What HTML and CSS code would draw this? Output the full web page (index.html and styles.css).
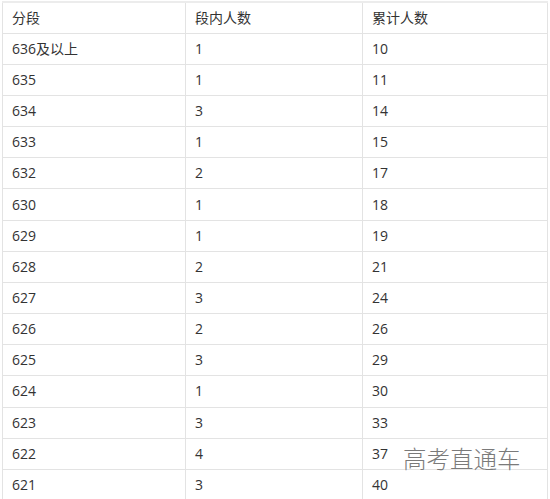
FILE: index.html
```html
<!DOCTYPE html>
<html lang="zh">
<head>
<meta charset="utf-8">
<link rel="stylesheet" href="styles.css">
</head>
<body>
<div class="wrap">
<table class="score">
<colgroup><col class="c1"><col class="c2"><col class="c3"></colgroup>
<tr><td>分段</td><td>段内人数</td><td>累计人数</td></tr>
<tr><td>636及以上</td><td>1</td><td>10</td></tr>
<tr><td>635</td><td>1</td><td>11</td></tr>
<tr><td>634</td><td>3</td><td>14</td></tr>
<tr><td>633</td><td>1</td><td>15</td></tr>
<tr><td>632</td><td>2</td><td>17</td></tr>
<tr><td>630</td><td>1</td><td>18</td></tr>
<tr><td>629</td><td>1</td><td>19</td></tr>
<tr><td>628</td><td>2</td><td>21</td></tr>
<tr><td>627</td><td>3</td><td>24</td></tr>
<tr><td>626</td><td>2</td><td>26</td></tr>
<tr><td>625</td><td>3</td><td>29</td></tr>
<tr><td>624</td><td>1</td><td>30</td></tr>
<tr><td>623</td><td>3</td><td>33</td></tr>
<tr><td>622</td><td>4</td><td>37</td></tr>
<tr><td>621</td><td>3</td><td>40</td></tr>
</table>
<div class="mark">高考直通车</div>
</div>
</body>
</html>
```
FILE: styles.css
```css
html, body {
  margin: 0;
  padding: 0;
  background: #fff;
  overflow: hidden;
}
.wrap {
  position: relative;
  padding: 1px 0 0 2px;
}
.score {
  border-collapse: collapse;
  width: 545px;
  table-layout: fixed;
  font-family: "Open Sans", "Noto Sans CJK SC", sans-serif;
  font-size: 14px;
  color: #333;
}
.c1 { width: 183px; }
.c2 { width: 177px; }
.c3 { width: 185px; }
.score td {
  border: 1px solid #e3e3e3;
  height: 31.17px;
  padding: 0 0 0 9px;
  box-sizing: border-box;
  line-height: 20px;
  vertical-align: middle;
}
.score tr:first-child td {
  border-top: 2px solid #ececec;
}
.mark {
  position: absolute;
  left: 403px;
  top: 442px;
  font-family: "Noto Sans CJK SC", sans-serif;
  font-weight: 300;
  font-size: 23.5px;
  line-height: 32px;
  color: #7a7a7a;
  text-shadow: 0 0 2px #fff;
}
```
